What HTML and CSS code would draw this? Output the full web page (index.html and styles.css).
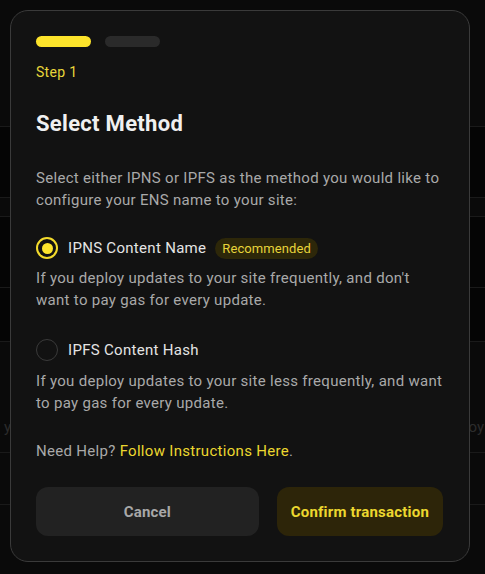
FILE: index.html
```html
<!DOCTYPE html>
<html lang="en">
<head>
<meta charset="utf-8">
<title>Select Method</title>
<link rel="stylesheet" href="styles.css">
</head>
<body>
<div class="page">
  <div class="row r1"></div>
  <div class="row r2"></div>
  <div class="row r3"></div>
  <div class="row r4"></div>
  <div class="row r5"></div>
  <div class="row r6"><span>y</span><span class="right">loy</span></div>
  <div class="row r7"></div>
  <div class="row r8"></div>
</div>
<div class="overlay">
  <div class="modal">
    <div class="progress">
      <span class="bar active"></span>
      <span class="bar"></span>
    </div>
    <div class="step">Step 1</div>
    <h2 class="title">Select Method</h2>
    <p class="intro">Select either IPNS or IPFS as the method you would like to configure your ENS name to your site:</p>

    <div class="option first">
      <span class="radio checked"><span class="dot"></span></span>
      <span class="label">IPNS Content Name</span>
      <span class="badge">Recommended</span>
    </div>
    <p class="desc d1">If you deploy updates to your site frequently, and don't want to pay gas for every update.</p>

    <div class="option second">
      <span class="radio"></span>
      <span class="label">IPFS Content Hash</span>
    </div>
    <p class="desc d2">If you deploy updates to your site less frequently, and want to pay gas for every update.</p>

    <p class="help">Need Help? <a href="#" class="link">Follow Instructions Here</a>.</p>

    <div class="actions">
      <button class="btn cancel">Cancel</button>
      <button class="btn confirm">Confirm transaction</button>
    </div>
  </div>
</div>
</body>
</html>
```
FILE: styles.css
```css
* { box-sizing: border-box; }
html, body { margin: 0; padding: 0; }
body {
  background: #0a0a0a;
  font-family: Roboto, "Liberation Sans", sans-serif;
  letter-spacing: 0.3px;
  width: 485px;
  height: 574px;
  overflow: hidden;
  position: relative;
}
.page { display: flex; flex-direction: column; }
.row { border-bottom: 1px solid #1a1a1a; background: #0a0a0a; color: #2c2c2c; font-size: 15px; display: flex; justify-content: space-between; align-items: center; padding: 0 0 0 4px; }
.r1 { height: 127px; }
.r2 { height: 71px; background: #050505; }
.r3 { height: 19px; }
.r4 { height: 71px; background: #050505; }
.r5 { height: 54px; background: #050505; }
.r6 { height: 111px; padding-top: 60px; }
.r6 .right { margin-right: 1px; letter-spacing: 0; }
.r7 { height: 52px; }
.r8 { height: 69px; border-bottom: none; }

.overlay { position: absolute; inset: 0; }
.modal {
  margin: 10px 0 0 10px;
  width: 460px;
  height: 552px;
  border: 1px solid #3a3a3a;
  border-radius: 18px;
  background: #121212;
  padding: 25px 26px 25px 25px;
  display: flex;
  flex-direction: column;
}
.progress { display: flex; gap: 14px; }
.bar { width: 55px; height: 11px; border-radius: 6px; background: #2a2a2a; }
.bar.active { background: #fde42b; }
.step { margin-top: 14px; font-size: 14px; line-height: 22px; color: #e8d63a; }
.title { margin: 26px 0 0; font-size: 22px; line-height: 30px; font-weight: 700; color: #f0f0f0; }
.intro, .desc, .help { margin: 0; font-size: 15px; line-height: 22px; color: #a9a9a9; }
.intro { margin-top: 28px; }
.option { display: flex; align-items: center; height: 24px; }
.option.first { margin-top: 25px; }
.option.second { margin-top: 27px; }
.radio {
  width: 22px; height: 22px; border-radius: 50%;
  border: 1.5px solid #3a3a3a;
  display: flex; align-items: center; justify-content: center;
  flex: none;
}
.radio.checked { border: 2px solid #f3db2c; }
.dot { width: 11px; height: 11px; border-radius: 50%; background: #fde42b; }
.label { margin-left: 10px; font-size: 15px; color: #e4e4e4; }
.badge {
  margin-left: 9px;
  height: 21px; padding: 0 7px; border-radius: 11px;
  background: #2d2709; color: #e8d43a;
  font-size: 13px; line-height: 21px; letter-spacing: 0.1px;
}
.desc.d1 { margin-top: 7px; }
.desc.d2 { margin-top: 8px; }
.help { margin-top: 26px; }
.link { color: #ecd72f; text-decoration: none; }
.actions { margin-top: 25px; display: flex; gap: 18px; }
.btn {
  height: 49px; border: none; border-radius: 12px;
  font-family: inherit; font-size: 15px; font-weight: 700; letter-spacing: 0.2px;
}
.cancel { flex: 1; background: #222222; color: #a8a8a8; }
.confirm { padding: 0 14px; background: #2d2509; color: #ecd72f; }
```
